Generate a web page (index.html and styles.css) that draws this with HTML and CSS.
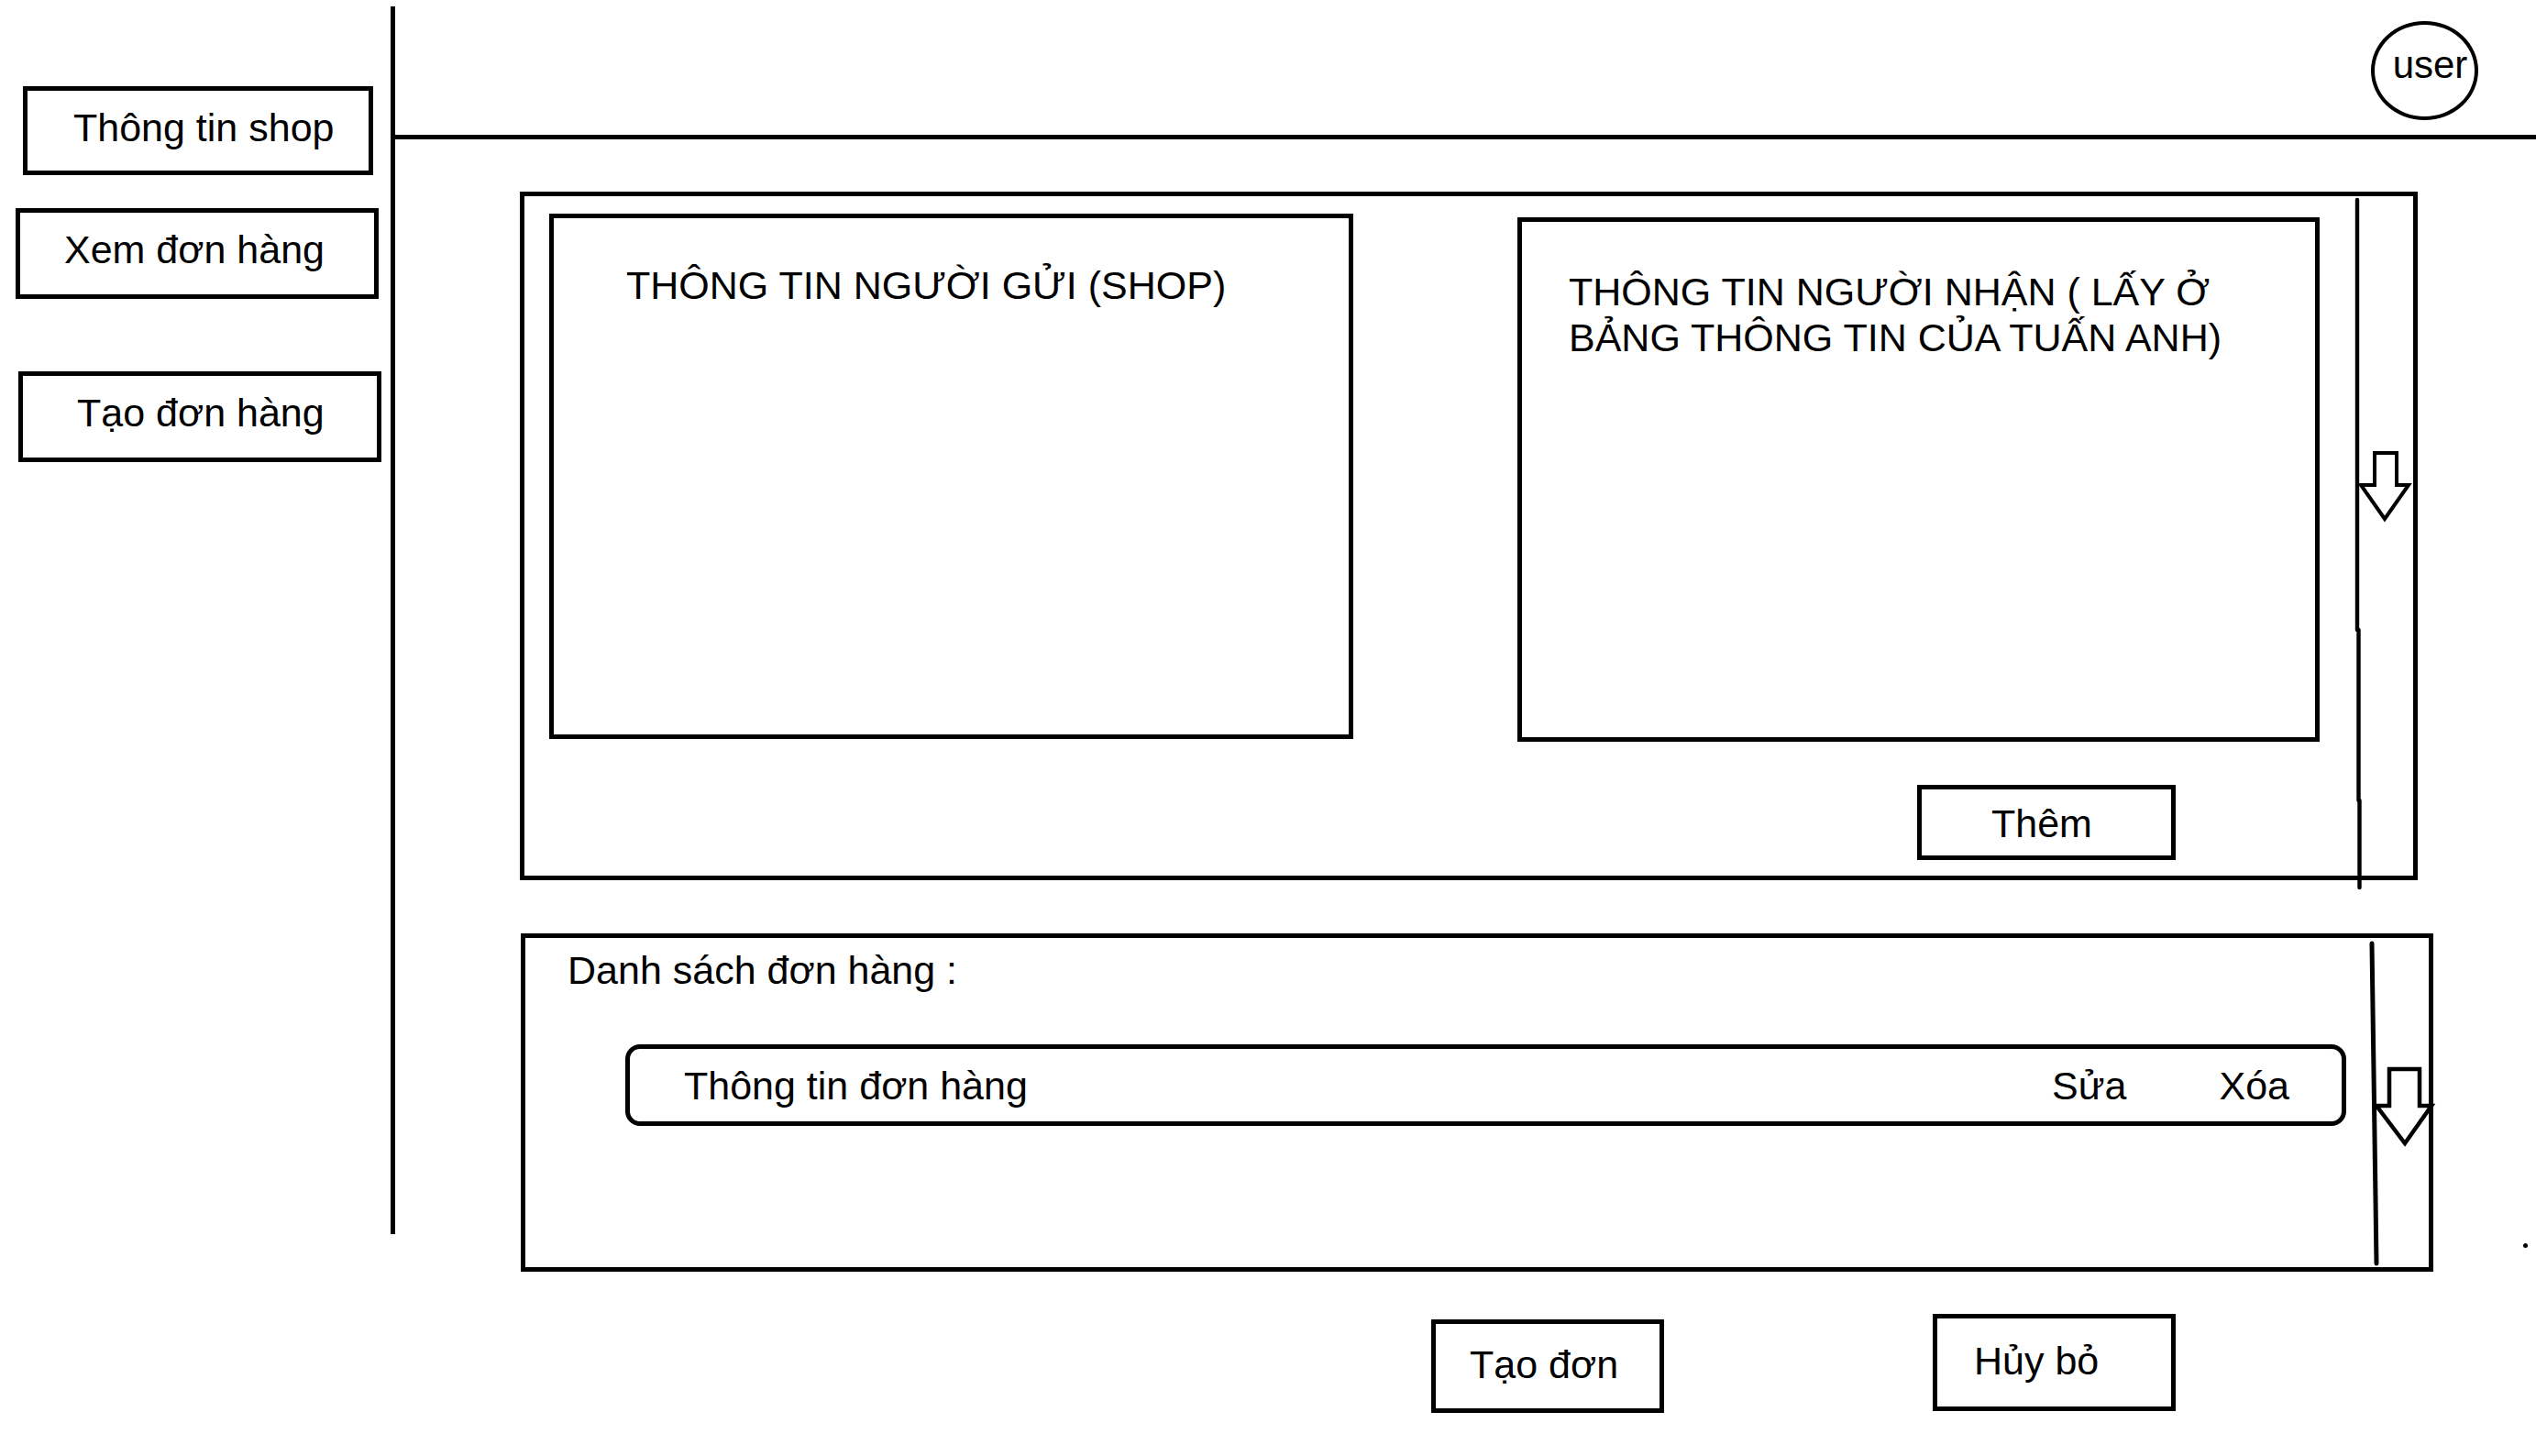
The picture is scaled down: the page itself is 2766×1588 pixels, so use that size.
FILE: index.html
```html
<!DOCTYPE html>
<html lang="vi">
<head>
<meta charset="utf-8">
<title>Tạo đơn hàng</title>
<link rel="stylesheet" href="styles.css">
</head>
<body>
<div class="page">
  <aside class="sidebar">
    <div class="nav-btn nav-btn--shop">Thông tin shop</div>
    <div class="nav-btn nav-btn--view">Xem đơn hàng</div>
    <div class="nav-btn nav-btn--create">Tạo đơn hàng</div>
  </aside>
  <main class="main">
    <header class="topbar">
      <div class="avatar">user</div>
    </header>
    <section class="content">
      <div class="panel panel--form">
        <div class="card card--sender">THÔNG TIN NGƯỜI GỬI (SHOP)</div>
        <div class="recv-col">
          <div class="card card--receiver">THÔNG TIN NGƯỜI NHẬN ( LẤY Ở<br>BẢNG THÔNG TIN CỦA TUẤN ANH)</div>
          <div class="btn btn--add">Thêm</div>
        </div>
        <svg class="scroll scroll--form" width="80" height="770" viewBox="2555 214 80 770" aria-hidden="true">
          <polyline points="2571,218 2571,687 2572.5,687 2572.5,873 2573.5,873 2573.5,968" fill="none" stroke="#000" stroke-width="4.4" stroke-linecap="round" stroke-linejoin="round"/>
          <polygon points="2590,494 2614,494 2614,529 2627,529 2601,566 2575,529 2590,529" fill="#fff" stroke="#000" stroke-width="4"/>
        </svg>
      </div>
      <div class="panel panel--list">
        <div class="list-title">Danh sách đơn hàng :</div>
        <div class="order-row">
          <span class="order-info">Thông tin đơn hàng</span>
          <span class="order-actions"><span>Sửa</span><span>Xóa</span></span>
        </div>
        <svg class="scroll scroll--list" width="85" height="362" viewBox="2575 1023 85 362" aria-hidden="true">
          <line x1="2587" y1="1029" x2="2592" y2="1378" stroke="#000" stroke-width="5" stroke-linecap="round"/>
          <polygon points="2606,1166 2639,1166 2639,1206 2652,1206 2623,1247 2592,1206 2606,1206" fill="#fff" stroke="#000" stroke-width="4.5"/>
        </svg>
        <span class="dot"></span>
      </div>
      <div class="actions">
        <div class="btn btn--submit">Tạo đơn</div>
        <div class="btn btn--cancel">Hủy bỏ</div>
      </div>
    </section>
  </main>
</div>
</body>
</html>
```
FILE: styles.css
```css
html, body {
  margin: 0;
  padding: 0;
  background: #fff;
}

body {
  font-family: "Liberation Sans", Arial, sans-serif;
  color: #000;
}

.page {
  display: flex;
  align-items: flex-start;
  width: 2766px;
  height: 1588px;
  overflow: hidden;
}

/* ---------- sidebar ---------- */
.sidebar {
  flex: 0 0 431px;
  box-sizing: border-box;
  height: 1339px;
  margin-top: 7px;
  padding-top: 87px;
  border-right: 5px solid #000;
}

.nav-btn {
  box-sizing: border-box;
  border: 5px solid #000;
  font-size: 43px;
  line-height: 80px;
  white-space: nowrap;
}

.nav-btn--shop {
  margin-left: 25px;
  width: 382px;
  height: 97px;
  padding-left: 50px;
}

.nav-btn--view {
  margin-top: 36px;
  margin-left: 17px;
  width: 396px;
  height: 99px;
  padding-left: 48px;
}

.nav-btn--create {
  margin-top: 79px;
  margin-left: 20px;
  width: 396px;
  height: 99px;
  padding-left: 59px;
}

/* ---------- main ---------- */
.main {
  flex: 1;
  min-width: 0;
}

.topbar {
  box-sizing: border-box;
  height: 152px;
  border-bottom: 5px solid #000;
  display: flex;
  justify-content: flex-end;
  padding: 23px 63px 0 0;
}

.avatar {
  box-sizing: border-box;
  width: 117px;
  height: 108px;
  border: 4px solid #000;
  border-radius: 50%;
  font-size: 42px;
  line-height: 87px;
  text-align: center;
  padding-left: 12px;
}

.content {
  padding-left: 136px;
}

.panel {
  position: relative;
  box-sizing: border-box;
  border: 5px solid #000;
}

.panel--form {
  width: 2070px;
  height: 751px;
  margin-top: 57px;
  display: flex;
  align-items: flex-start;
  padding: 19px 0 0 27px;
}

.card {
  box-sizing: border-box;
  border: 5px solid #000;
  font-size: 43px;
  line-height: 50px;
}

.card--sender {
  width: 877px;
  height: 573px;
  padding: 48px 0 0 79px;
}

.recv-col {
  display: flex;
  flex-direction: column;
  margin-left: 179px;
  margin-top: 4px;
}

.card--receiver {
  width: 875px;
  height: 572px;
  padding: 51px 0 0 51px;
}

.btn {
  box-sizing: border-box;
  border: 5px solid #000;
  font-size: 43px;
  white-space: nowrap;
}

.btn--add {
  margin: 47px 0 0 436px;
  width: 282px;
  height: 82px;
  padding: 1px 0 0 76px;
  line-height: 72px;
}

.scroll {
  position: absolute;
  top: 0;
  overflow: visible;
}

.scroll--form {
  left: 1983px;
}

.scroll--list {
  left: 2002px;
}

.panel--list {
  width: 2086px;
  height: 369px;
  margin: 58px 0 0 1px;
  padding: 10px 0 0 46px;
}

.list-title {
  font-size: 43px;
  line-height: 50px;
}

.order-row {
  box-sizing: border-box;
  display: flex;
  width: 1877px;
  height: 89px;
  margin: 56px 0 0 63px;
  padding: 2px 57px 0 59px;
  border: 5px solid #000;
  border-radius: 16px;
  font-size: 43px;
  line-height: 77px;
}

.order-actions {
  margin-left: auto;
  display: flex;
  gap: 101px;
}

.dot {
  position: absolute;
  left: 2179px;
  top: 333px;
  width: 5px;
  height: 5px;
  border-radius: 50%;
  background: #000;
}

.actions {
  display: flex;
  align-items: flex-start;
  margin-top: 46px;
  padding-left: 994px;
}

.btn--submit {
  margin-top: 6px;
  width: 254px;
  height: 102px;
  padding-left: 37px;
  line-height: 88px;
}

.btn--cancel {
  margin-left: 293px;
  width: 265px;
  height: 106px;
  padding-left: 40px;
  line-height: 92px;
}
```
